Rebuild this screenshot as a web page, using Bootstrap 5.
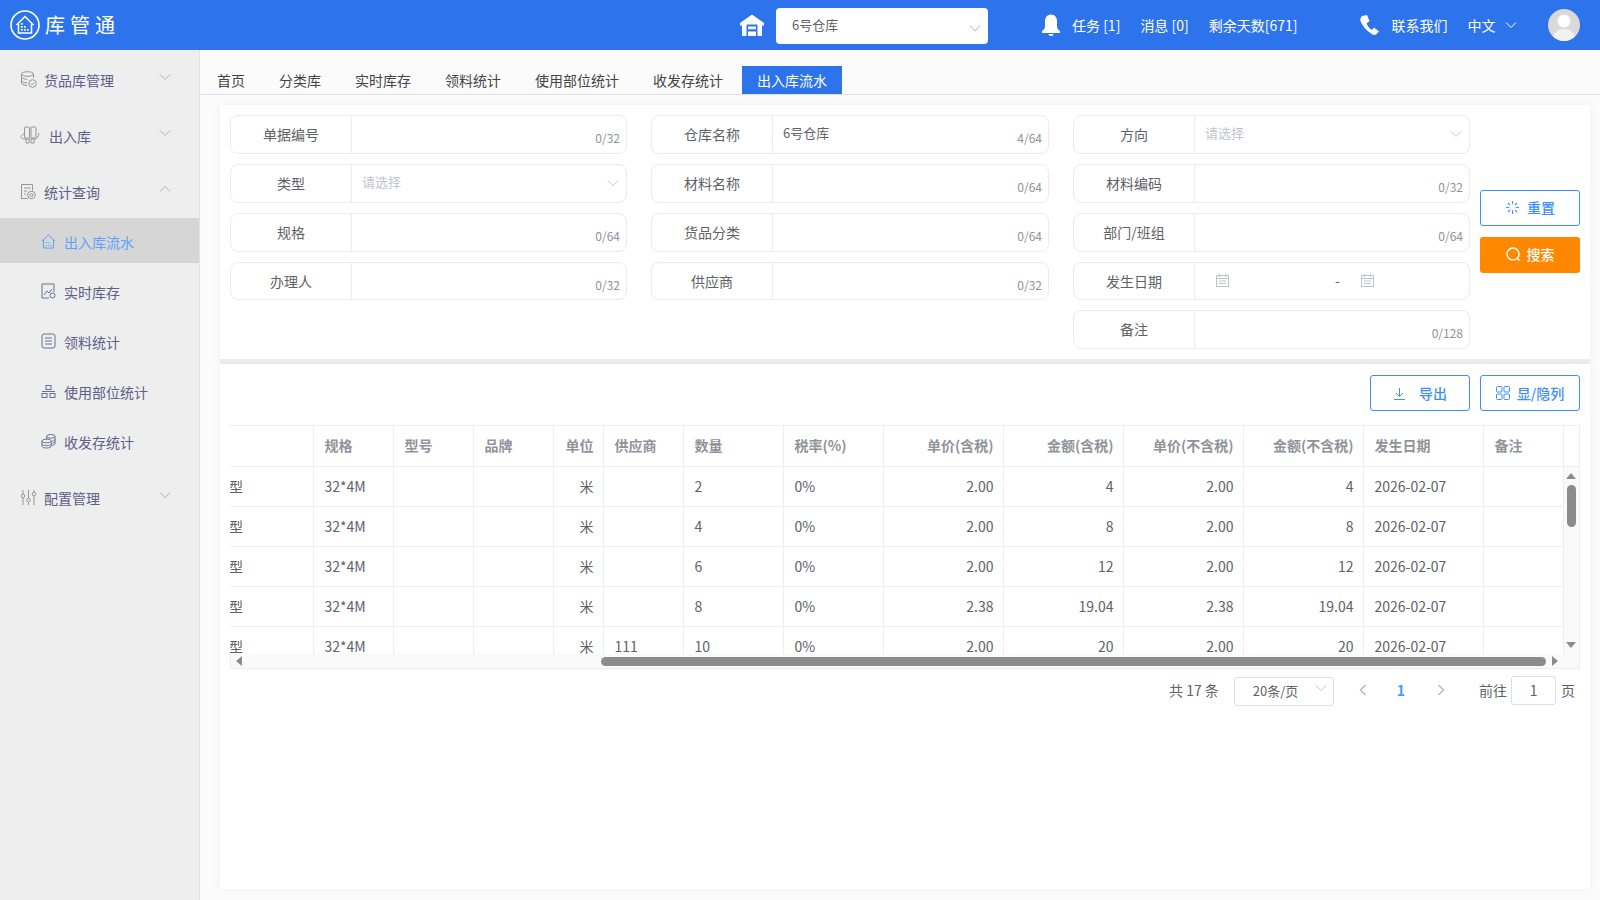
<!DOCTYPE html>
<html lang="zh-CN">
<head>
<meta charset="utf-8">
<title>库管通</title>
<link href="https://cdn.jsdelivr.net/npm/bootstrap@5.3.0/dist/css/bootstrap.min.css" rel="stylesheet">
<style>
html,body{height:100%;}
body{font-family:"Noto Sans CJK SC","Noto Sans",sans-serif;font-size:14px;color:#606266;background:#fbfbfb;overflow:hidden;width:1600px;height:900px;}
svg{display:block;flex:none;}
.topbar{height:50px;background:#2d74ec;color:#fff;}
.logo-txt{font-size:20px;letter-spacing:5px;margin-left:5px;line-height:1;margin-top:-1px;}
.brand{width:740px;padding-left:10px;}
.hs-select{width:212px;height:36px;margin-left:12px;margin-top:2px;background:#fff;border-radius:4px;color:#606266;font-size:13px;padding:0 7px 3px 16px;margin-right:53px;}
.hs-select svg{margin-top:6px;}
.bell-txt{margin-left:11px;}
.gap-a{margin-left:20px;}
.gap-b{margin-left:61px;}
.phone-txt{margin-left:12px;}
.hdr-chev{margin-left:8px;}
.avatar{width:32px;height:32px;border-radius:50%;background:#d9d9d9;margin-left:30px;overflow:hidden;}
.shell{height:850px;}
.sidenav{width:200px;background:#eee;border-right:1px solid #e2e2e2;}
.sn-parent{height:56px;padding:0 28px 0 20px;color:#5d6088;}
.sn-parent>svg:first-child{margin-top:2px;}
.sn-parent .lbl{margin-left:7px;margin-top:5px;}
.sn-parent .lbl.lbl-far{margin-left:9px;}
.sn-parent .chev{margin-left:auto;margin-top:-2px;}
.sn-sub{height:45px;margin-bottom:5px;padding-left:41px;color:#5d6088;}
.sn-sub>svg{margin-top:1px;}
.sn-sub .lbl{margin-left:8px;margin-top:3px;}
.sn-sub.on{background:#d6d6d6;color:#5aa2fb;width:199px;}
.pane{width:1400px;}
.tabbar{height:45px;padding-left:2px;border-bottom:1px solid #e0e0e0;gap:4px;}
.tabitem{height:28px;padding:0 15px;color:#444;line-height:28px;}
.tabitem.on{background:#2d74ec;color:#fff;}
.sheet{margin-left:20px;width:1370px;background:#fff;box-shadow:0 0 8px rgba(0,0,0,.05);padding:10px;}
.sheet-a{margin-top:10px;height:259px;border-bottom:5px solid #eee;}
.sheet-b{height:525px;padding-top:11px;}
.fgrid{width:1240px;display:grid;grid-template-columns:397px 398px 397px;column-gap:24px;grid-template-rows:39px 39px 39px 38px 39px;row-gap:10px;}
.fld{border:1px solid #ececec;border-radius:8px;position:relative;}
.fld .cap{width:121px;border-right:1px solid #ececec;text-align:center;flex:none;}
.fld .val{font-size:13px;padding-left:10px;flex:1;min-width:0;margin-top:-3px;}
.fld .val.datecell{margin-top:-1px;padding-left:21px;}
.dash{margin-left:106px;margin-right:21px;color:#606266;font-size:14px;}
.ph{color:#c0c4cc;}
.cnt{font-size:12px;color:#909399;position:absolute;right:6px;top:13px;}
.chev-r{position:absolute;right:7px;top:14px;}
.act-col{width:100px;margin-left:10px;gap:11px;padding-bottom:2px;}
.btn-line{width:100px;height:36px;border:1px solid #3d8ffc;border-radius:3px;background:#fff;color:#3d8ffc;padding:0;gap:7px;font-size:14px;font-weight:500;}
.btn-line:hover{background:#fff;color:#3d8ffc;border-color:#3d8ffc;}
.btn-org{width:100px;height:36px;background:#ff8800;color:#fff;border:0;border-radius:3px;padding:0;gap:6px;font-size:14px;font-weight:500;}
.btn-org:hover{background:#ff8800;color:#fff;}
.toolbar{gap:10px;height:36px;margin-bottom:14px;}
.gap-ico{gap:13px;}
.gridbox{width:1350px;border:1px solid #ebeef5;height:244px;}
.clipper{width:1333px;height:228px;overflow:hidden;margin-left:-1px;}
.datagrid{table-layout:fixed;width:1333px;margin:0;--bs-table-border-color:#ebeef5;--bs-table-color:#606266;--bs-table-bg:#fff;border-top:0;border-left:0;}
.datagrid,.datagrid thead,.datagrid tbody,.datagrid tr{border-color:#ebeef5;}
.datagrid tr{border-top-width:0;}
.datagrid th,.datagrid td{padding:0 9px 1px 11px;height:40px;vertical-align:middle;white-space:nowrap;overflow:hidden;border-color:#ebeef5;font-size:14px;line-height:20px;}
.datagrid thead tr th{border-top:0;padding-bottom:2px;}
.datagrid th{font-weight:700;color:#909399;}
.datagrid th:first-child,.datagrid td:first-child{padding:0 0 1px;border-left:0;text-indent:-1px;}
.vtrack{width:16px;border-left:1px solid #ebeef5;}
.vhead{height:40px;background:#fff;}
.vrail{height:188px;background:#fafafa;position:relative;border-top:1px solid #ebeef5;}
.vthumb{position:absolute;left:3px;top:18px;width:9px;height:42px;border-radius:5px;background:#8c8c8c;}
.tri-u,.tri-d{position:absolute;left:2px;width:0;height:0;border-left:5.5px solid transparent;border-right:5.5px solid transparent;}
.tri-u{top:6px;border-bottom:6px solid #8c8c8c;}
.tri-d{bottom:6px;border-top:6px solid #8c8c8c;}
.hrail{height:14px;background:#fafafa;position:relative;}
.hthumb{position:absolute;left:370px;top:3px;width:945px;height:9px;border-radius:5px;background:#8c8c8c;}
.tri-l,.tri-r{position:absolute;top:2px;width:0;height:0;border-top:5.5px solid transparent;border-bottom:5.5px solid transparent;}
.tri-l{left:5px;border-right:6px solid #8c8c8c;}
.tri-r{right:21px;border-left:6px solid #8c8c8c;}
.pager{margin-top:6px;height:30px;padding-left:939px;}
.pg-size{width:100px;height:29px;border:1px solid #dcdfe6;border-radius:3px;margin-left:15px;margin-top:2px;position:relative;padding-left:18px;font-size:13px;line-height:25px;}
.pg-size svg{position:absolute;right:6px;top:6px;}
.pg-num{color:#409eff;font-weight:700;margin:0 32px 0 30px;font-size:14px;}
.pg-prev{margin-left:25px;}
.pg-go{margin-left:34px;}
.pg-input{width:45px;height:29px;border:1px solid #dcdfe6;border-radius:3px;text-align:center;margin:1px 5px 0 4px;line-height:27px;font-size:14px;}
</style>
</head>
<body>
<header class="topbar d-flex align-items-center">
  <div class="brand d-flex align-items-center">
    <svg width="30" height="30" viewBox="0 0 30 30" fill="none" stroke="#fff"><circle cx="15" cy="15" r="14" stroke-width="1.6"/><path d="M6.500 15 15 6.500 23.500 15M8.500 14v9h13v-9" stroke-width="1.500"/><g fill="#fff" stroke="none"><rect x="11" y="13" width="1.700" height="1.700"/><rect x="11" y="16" width="1.700" height="1.700"/><rect x="11" y="19" width="1.700" height="1.700"/><rect x="14" y="16" width="1.700" height="1.700"/><rect x="14" y="19" width="1.700" height="1.700"/><rect x="17" y="19" width="1.700" height="1.700"/></g></svg>
    <span class="logo-txt">库管通</span>
  </div>
  <svg width="24" height="22" viewBox="0 0 24 22" fill="#fff"><path d="M12 .5 24 9v2.500H22V22H2V11.500H0V9Z"/><path fill="#2d74ec" d="M6.500 10.500h11V22h-11Z"/><path d="M8 12.500h8v2.800H8ZM8 17.500h8V22H8Z"/></svg>
  <div class="hs-select d-flex align-items-center justify-content-between"><span>6号仓库</span><svg width="12" height="12" viewBox="0 0 12 12" fill="none" stroke="#b4b8bf"><path d="M1 3.500 6 9l5-5.500"/></svg></div>
  <svg width="20" height="22" viewBox="0 0 20 22" fill="#fff"><path d="M10 .5C6 .5 4 3.500 4 7.500V12.500C4 14.500 3 15.500 1 17V19H19V17C17 15.500 16 14.500 16 12.500V7.500C16 3.500 14 .5 10 .5Z"/><path d="M7.500 20h5a2.500 2 0 0 1-5 0Z"/></svg>
  <span class="bell-txt">任务 [1]</span>
  <span class="gap-a">消息 [0]</span>
  <span class="gap-a">剩余天数[671]</span>
  <span class="gap-b"><svg width="21" height="21" viewBox="0 0 21 21" fill="#fff"><path d="M3 1 8 0 10.500 6 7.500 8.500C8.500 11 10.500 13.500 13 15L15 12.500 20 16.500 17.500 19C16 20.500 14 20 12 18.500 7 15 3 10.500 1.500 6 1 4 1.500 2.500 3 1Z"/></svg></span>
  <span class="phone-txt">联系我们</span>
  <span class="gap-a">中文</span>
  <svg class="hdr-chev" width="14" height="10" viewBox="0 0 14 10" fill="none" stroke="#fff"><path d="M2 2.500 7 7.500l5-5"/></svg>
  <div class="avatar"><svg width="32" height="32" viewBox="0 0 32 32"><circle cx="16" cy="12" r="6.500" fill="#fff"/><path d="M4 32c1-9 6-12 12-12s11 3 12 12Z" fill="#f1f1f1"/></svg></div>
</header>

<div class="shell d-flex">
  <nav class="sidenav">
    <div class="sn-parent d-flex align-items-center">
      <svg width="17" height="17" viewBox="0 0 17 17" fill="none" stroke="#969696"><ellipse cx="7.500" cy="3" rx="6" ry="2.300"/><path d="M1.500 3v9c0 1.300 2.500 2.300 5.500 2.300M13.500 3v4M1.500 6c0 1.300 2.700 2.300 6 2.300M1.500 9.500c0 1.300 2.500 2.300 5.500 2.300"/><circle cx="12.500" cy="12.500" r="3.800"/><path d="m10.800 12.500 1.300 1.300 2.200-2.300"/></svg>
      <span class="lbl">货品库管理</span>
      <svg class="chev" width="12" height="8" viewBox="0 0 12 8" fill="none" stroke="#b0b0b0"><path d="M1 1.500 6 6.500l5-5"/></svg>
    </div>
    <div class="sn-parent d-flex align-items-center">
      <svg width="20" height="18" viewBox="0 0 20 18" fill="none" stroke="#969696"><rect x="4.500" y="1" width="5" height="11" rx="1"/><rect x="11" y="1" width="5" height="11" rx="1"/><path d="M4.500 7 1 10.500c0 2 1.500 2.500 3.500 2.500H15c2 0 3-1.500 4-6M6 13v4h3v-4M11 13v4h3v-4"/></svg>
      <span class="lbl lbl-far">出入库</span>
      <svg class="chev" width="12" height="8" viewBox="0 0 12 8" fill="none" stroke="#b0b0b0"><path d="M1 1.500 6 6.500l5-5"/></svg>
    </div>
    <div class="sn-parent d-flex align-items-center">
      <svg width="17" height="17" viewBox="0 0 17 17" fill="none" stroke="#969696"><path d="M8 15.500H1.500V1.500h11v6M4 5h6.500M4 8h3M4 11h2"/><circle cx="11.500" cy="12" r="3.800"/><circle cx="11.500" cy="12" r="1.500"/></svg>
      <span class="lbl">统计查询</span>
      <svg class="chev" width="12" height="8" viewBox="0 0 12 8" fill="none" stroke="#b0b0b0"><path d="M1 6.500 6 1.500l5 5"/></svg>
    </div>
    <div class="sn-sub on d-flex align-items-center">
      <svg width="15" height="15" viewBox="0 0 15 15" fill="none" stroke="#5aa2fb"><path d="M1 7 7.500 1 14 7M2.500 6v8h10V6"/><path d="M5.500 8v1M5.500 11v1M8 11v1M10 11v1M8 8.500v1" stroke-width="1.200"/></svg>
      <span class="lbl">出入库流水</span>
    </div>
    <div class="sn-sub d-flex align-items-center">
      <svg width="15" height="16" viewBox="0 0 15 16" fill="none" stroke="#686c95"><path d="M8 15H1V1h12v8"/><path d="M3 12 6 8l2 2 3-4"/><circle cx="11.500" cy="12.500" r="2.500"/></svg>
      <span class="lbl">实时库存</span>
    </div>
    <div class="sn-sub d-flex align-items-center">
      <svg width="15" height="16" viewBox="0 0 15 16" fill="none" stroke="#686c95"><rect x="1" y="1" width="13" height="14" rx="2"/><path d="M4 5h7M4 8h7M4 11h7"/></svg>
      <span class="lbl">领料统计</span>
    </div>
    <div class="sn-sub d-flex align-items-center">
      <svg width="15" height="15" viewBox="0 0 15 15" fill="none" stroke="#686c95"><rect x="5" y="1.500" width="5" height="4"/><rect x="1" y="9.500" width="5" height="4"/><rect x="9" y="9.500" width="5" height="4"/><path d="M1 7.500h13"/></svg>
      <span class="lbl">使用部位统计</span>
    </div>
    <div class="sn-sub d-flex align-items-center">
      <svg width="15" height="16" viewBox="0 0 16 16" fill="none" stroke="#686c95"><ellipse cx="10.500" cy="3" rx="4.500" ry="2"/><path d="M6 3v3M15 3v8c0 1-1.500 1.500-3 1.800M15 6c0 1-1.500 1.800-3 2M15 8.500c0 1-1.500 1.800-3 2"/><ellipse cx="6" cy="8" rx="5" ry="2"/><path d="M1 8v5.500c0 1 2.200 2 5 2s5-1 5-2V8M1 11c0 1 2.200 2 5 2s5-1 5-2"/></svg>
      <span class="lbl">收发存统计</span>
    </div>
    <div class="sn-parent d-flex align-items-center">
      <svg width="17" height="17" viewBox="0 0 17 17" fill="none" stroke="#969696"><path d="M3 1v4M3 9v7M8.500 1v8M8.500 13v3M14 1v2M14 7v9"/><circle cx="3" cy="7" r="1.800"/><circle cx="8.500" cy="11" r="1.800"/><circle cx="14" cy="5" r="1.800"/></svg>
      <span class="lbl">配置管理</span>
      <svg class="chev" width="12" height="8" viewBox="0 0 12 8" fill="none" stroke="#b0b0b0"><path d="M1 1.500 6 6.500l5-5"/></svg>
    </div>
  </nav>

  <main class="pane">
    <div class="tabbar d-flex align-items-end">
      <div class="tabitem">首页</div>
      <div class="tabitem">分类库</div>
      <div class="tabitem">实时库存</div>
      <div class="tabitem">领料统计</div>
      <div class="tabitem">使用部位统计</div>
      <div class="tabitem">收发存统计</div>
      <div class="tabitem on">出入库流水</div>
    </div>

    <section class="sheet sheet-a d-flex">
      <div class="fgrid">
        <div class="fld d-flex align-items-center"><div class="cap h-100 d-flex align-items-center justify-content-center">单据编号</div><div class="val"></div><span class="cnt">0/32</span></div>
        <div class="fld d-flex align-items-center"><div class="cap h-100 d-flex align-items-center justify-content-center">仓库名称</div><div class="val">6号仓库</div><span class="cnt">4/64</span></div>
        <div class="fld d-flex align-items-center"><div class="cap h-100 d-flex align-items-center justify-content-center">方向</div><div class="val ph">请选择</div><svg class="chev-r" width="12" height="8" viewBox="0 0 12 8" fill="none" stroke="#c0c4cc"><path d="M1 1.500 6 6.500l5-5"/></svg></div>

        <div class="fld d-flex align-items-center"><div class="cap h-100 d-flex align-items-center justify-content-center">类型</div><div class="val ph">请选择</div><svg class="chev-r" width="12" height="8" viewBox="0 0 12 8" fill="none" stroke="#c0c4cc"><path d="M1 1.500 6 6.500l5-5"/></svg></div>
        <div class="fld d-flex align-items-center"><div class="cap h-100 d-flex align-items-center justify-content-center">材料名称</div><div class="val"></div><span class="cnt">0/64</span></div>
        <div class="fld d-flex align-items-center"><div class="cap h-100 d-flex align-items-center justify-content-center">材料编码</div><div class="val"></div><span class="cnt">0/32</span></div>

        <div class="fld d-flex align-items-center"><div class="cap h-100 d-flex align-items-center justify-content-center">规格</div><div class="val"></div><span class="cnt">0/64</span></div>
        <div class="fld d-flex align-items-center"><div class="cap h-100 d-flex align-items-center justify-content-center">货品分类</div><div class="val"></div><span class="cnt">0/64</span></div>
        <div class="fld d-flex align-items-center"><div class="cap h-100 d-flex align-items-center justify-content-center">部门/班组</div><div class="val"></div><span class="cnt">0/64</span></div>

        <div class="fld d-flex align-items-center"><div class="cap h-100 d-flex align-items-center justify-content-center">办理人</div><div class="val"></div><span class="cnt">0/32</span></div>
        <div class="fld d-flex align-items-center"><div class="cap h-100 d-flex align-items-center justify-content-center">供应商</div><div class="val"></div><span class="cnt">0/32</span></div>
        <div class="fld d-flex align-items-center"><div class="cap h-100 d-flex align-items-center justify-content-center">发生日期</div>
          <div class="val datecell d-flex align-items-center">
            <svg width="13" height="13" viewBox="0 0 13 13" fill="none" stroke="#c0c4cc"><rect x=".5" y="1.500" width="12" height="11"/><path d="M.5 4.500h12M3.500 0v3M9.500 0v3M3 7h7M3 9.500h7" /></svg>
            <span class="dash">-</span>
            <svg width="13" height="13" viewBox="0 0 13 13" fill="none" stroke="#c0c4cc"><rect x=".5" y="1.500" width="12" height="11"/><path d="M.5 4.500h12M3.500 0v3M9.500 0v3M3 7h7M3 9.500h7"/></svg>
          </div>
        </div>

        <div></div><div></div>
        <div class="fld d-flex align-items-center"><div class="cap h-100 d-flex align-items-center justify-content-center">备注</div><div class="val"></div><span class="cnt">0/128</span></div>
      </div>
      <div class="act-col d-flex flex-column justify-content-center">
        <button type="button" class="btn btn-line d-flex align-items-center justify-content-center">
          <svg width="15" height="15" viewBox="0 0 14 14" fill="none" stroke="#3d8ffc"><path d="M7 1v3M7 9.500V13M1 7h3M10 7h3M2.800 2.800l2 2M11.200 2.800l-2 2M2.800 11.200l2-2M9.500 9.500l2 2"/></svg>重置</button>
        <button type="button" class="btn btn-org d-flex align-items-center justify-content-center">
          <svg width="15" height="15" viewBox="0 0 15 15" fill="none" stroke="#fff" stroke-width="1.400"><circle cx="7" cy="7" r="6"/><path d="m11.500 11.500 2 2"/></svg>搜索</button>
      </div>
    </section>

    <section class="sheet sheet-b">
      <div class="toolbar d-flex justify-content-end">
        <button type="button" class="btn btn-line gap-ico d-flex align-items-center justify-content-center">
          <svg width="13" height="13" viewBox="0 0 13 13" fill="none" stroke="#3d8ffc"><path d="M6.500 1v8M3 6l3.500 3.500L10 6M1 12.500h11"/></svg><span>导出</span></button>
        <button type="button" class="btn btn-line d-flex align-items-center justify-content-center">
          <svg width="14" height="14" viewBox="0 0 14 14" fill="none" stroke="#3d8ffc"><rect x=".5" y=".5" width="5.500" height="5.500" rx="1"/><rect x="8" y=".5" width="5.500" height="5.500" rx="1"/><rect x=".5" y="8" width="5.500" height="5.500" rx="1"/><rect x="8" y="8" width="5.500" height="5.500" rx="1"/></svg>显/隐列</button>
      </div>
      <div class="gridbox">
        <div class="d-flex">
          <div class="clipper">
            <table class="table table-bordered datagrid">
              <colgroup><col style="width:83px"><col style="width:80px"><col style="width:80px"><col style="width:80px"><col style="width:50px"><col style="width:80px"><col style="width:100px"><col style="width:100px"><col style="width:120px"><col style="width:120px"><col style="width:120px"><col style="width:120px"><col style="width:120px"><col style="width:80px"></colgroup>
              <thead><tr><th></th><th>规格</th><th>型号</th><th>品牌</th><th class="text-end">单位</th><th>供应商</th><th>数量</th><th>税率(%)</th><th class="text-end">单价(含税)</th><th class="text-end">金额(含税)</th><th class="text-end">单价(不含税)</th><th class="text-end">金额(不含税)</th><th>发生日期</th><th>备注</th></tr></thead>
              <tbody>
                <tr><td>型</td><td>32*4M</td><td></td><td></td><td class="text-end">米</td><td></td><td>2</td><td>0%</td><td class="text-end">2.00</td><td class="text-end">4</td><td class="text-end">2.00</td><td class="text-end">4</td><td>2026-02-07</td><td></td></tr>
                <tr><td>型</td><td>32*4M</td><td></td><td></td><td class="text-end">米</td><td></td><td>4</td><td>0%</td><td class="text-end">2.00</td><td class="text-end">8</td><td class="text-end">2.00</td><td class="text-end">8</td><td>2026-02-07</td><td></td></tr>
                <tr><td>型</td><td>32*4M</td><td></td><td></td><td class="text-end">米</td><td></td><td>6</td><td>0%</td><td class="text-end">2.00</td><td class="text-end">12</td><td class="text-end">2.00</td><td class="text-end">12</td><td>2026-02-07</td><td></td></tr>
                <tr><td>型</td><td>32*4M</td><td></td><td></td><td class="text-end">米</td><td></td><td>8</td><td>0%</td><td class="text-end">2.38</td><td class="text-end">19.04</td><td class="text-end">2.38</td><td class="text-end">19.04</td><td>2026-02-07</td><td></td></tr>
                <tr><td>型</td><td>32*4M</td><td></td><td></td><td class="text-end">米</td><td>111</td><td>10</td><td>0%</td><td class="text-end">2.00</td><td class="text-end">20</td><td class="text-end">2.00</td><td class="text-end">20</td><td>2026-02-07</td><td></td></tr>
              </tbody>
            </table>
          </div>
          <div class="vtrack">
            <div class="vhead"></div>
            <div class="vrail"><span class="tri-u"></span><span class="vthumb"></span><span class="tri-d"></span></div>
          </div>
        </div>
        <div class="hrail"><span class="tri-l"></span><span class="hthumb"></span><span class="tri-r"></span></div>
      </div>
      <div class="pager d-flex align-items-center">
        <span>共 17 条</span>
        <div class="pg-size">20条/页<svg width="12" height="8" viewBox="0 0 12 8" fill="none" stroke="#c0c4cc"><path d="M1 1.500 6 6.500l5-5"/></svg></div>
        <svg class="pg-prev" width="8" height="12" viewBox="0 0 8 12" fill="none" stroke="#b0b4bb" stroke-width="1.300"><path d="M6.500 1 1.500 6l5 5"/></svg>
        <span class="pg-num">1</span>
        <svg width="8" height="12" viewBox="0 0 8 12" fill="none" stroke="#b0b4bb" stroke-width="1.300"><path d="M1.500 1 6.500 6l-5 5"/></svg>
        <span class="pg-go">前往</span>
        <div class="pg-input">1</div>
        <span>页</span>
      </div>
    </section>
  </main>
</div>
<script src="https://cdn.jsdelivr.net/npm/bootstrap@5.3.0/dist/js/bootstrap.bundle.min.js"></script>
</body>
</html>
